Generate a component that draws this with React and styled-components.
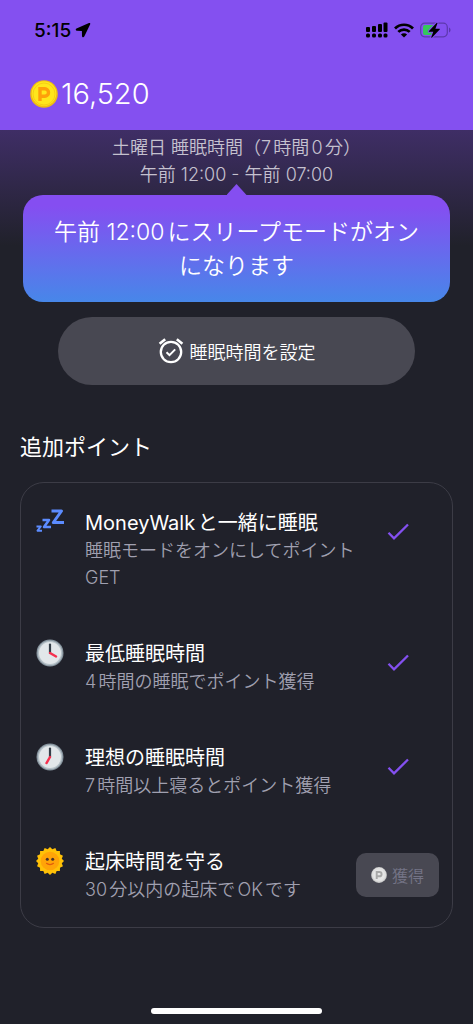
import React from 'react';
import styled, { createGlobalStyle } from 'styled-components';

const GlobalStyle = createGlobalStyle`
  * {
    box-sizing: border-box;
  }

  body {
    margin: 0;
    background: #20212a;
    font-family: Inter, 'Noto Sans CJK JP', sans-serif;
    font-weight: 350;
    text-autospace: normal;
  }

  button {
    font: inherit;
    border: none;
    cursor: pointer;
  }
`;

const Page = styled.div`
  display: flex;
  flex-direction: column;
  min-height: 100vh;
  background: #20212a;
  color: #fff;
`;

const Header = styled.header`
  padding: 18px 22px 18px 30px;
  background: #8450f0;
`;

const StatusBar = styled.div`
  display: flex;
  align-items: center;
  justify-content: space-between;
  height: 24px;
  padding-left: 4px;
  color: #000;
`;

const StatusGroup = styled.div`
  display: flex;
  align-items: center;
  gap: ${props => props.gap};
  font-size: 19px;
  font-weight: 500;
`;

const Points = styled.div`
  display: flex;
  align-items: center;
  gap: 3px;
  margin-top: 34px;
  font-size: 29px;
  font-weight: 300;
  line-height: 36px;
`;

const Main = styled.main`
  flex: 1;
  padding: 4px 20px 24px;
  background: linear-gradient(#3f2e66, #20212a 116px);
`;

const Schedule = styled.p`
  margin: 0;
  color: #c5c1cf;
  font-size: 18px;
  line-height: 27px;
  text-align: center;
`;

const Bubble = styled.div`
  position: relative;
  margin: 7px 3px 15px;
  padding: 20px 30px 19px;
  border-radius: 20px;
  background: linear-gradient(#854ef1 10%, #4787e9);
  font-size: 23px;
  line-height: 34px;
  text-align: center;

  &::before {
    content: '';
    position: absolute;
    bottom: 100%;
    left: 50%;
    width: 20px;
    height: 11px;
    margin-left: -10px;
    background: #854ef1;
    clip-path: polygon(50% 0, 100% 100%, 0 100%);
  }
`;

const SetButton = styled.button`
  display: flex;
  align-items: center;
  justify-content: center;
  gap: 6px;
  width: calc(100% - 76px);
  height: 68px;
  margin: 0 38px;
  padding: 0;
  border-radius: 34px;
  background: #484852;
  color: #fff;
  && {
    font-size: 18px;
  }
`;

const SectionTitle = styled.h2`
  margin: 46px 0 18px;
  font-size: 22px;
  font-weight: 400;
  line-height: 33px;
`;

const MissionList = styled.ul`
  display: flex;
  flex-direction: column;
  gap: 48px;
  margin: 0;
  padding: 25px 13px 24px 15px;
  border: 1px solid #3c3c46;
  border-radius: 24px;
  list-style: none;
`;

const Mission = styled.li`
  display: grid;
  grid-template-columns: 28px 1fr 83px;
`;

const MissionIcon = styled.div`
  height: 28px;
`;

const MissionText = styled.div`
  padding: 2px 0 0 21px;
  line-height: 27px;
`;

const MissionTitle = styled.h3`
  margin: 0;
  font-size: 20px;
  font-weight: 400;
`;

const MissionDetail = styled.p`
  margin: 0;
  color: #a0a0b0;
  font-size: 18px;
`;

const Done = styled.div`
  display: flex;
  align-items: center;
  justify-content: center;
  height: 48px;
`;

const ClaimButton = styled.button`
  display: flex;
  align-items: center;
  justify-content: center;
  gap: 5px;
  width: 100%;
  height: 44px;
  margin-top: 6px;
  padding: 0;
  border-radius: 10px;
  background: #484852;
  color: #747486;
  && {
    font-size: 16px;
  }
`;

const HomeIndicator = styled.div`
  width: 36%;
  height: 6px;
  margin: 0 auto 10px;
  border-radius: 3px;
  background: #fff;
`;

const LocationIcon = () => (
  <svg width="16" height="16" viewBox="0 0 16 16" aria-hidden="true">
    <path d="M14 1 1.500 6.500C.3 7.100.6 8.800 2 8.800l4.900.1.100 5c0 1.500 1.800 1.700 2.400.4L15.200 2.200c.3-.9-.3-1.500-1.200-1.200Z" />
  </svg>
);

const SignalIcon = () => (
  <svg width="22" height="16" viewBox="0 0 22 16" aria-hidden="true">
    <rect x="0" y="5" width="4" height="5" rx="1" />
    <rect x="6" y="4" width="4" height="6" rx="1" />
    <rect x="12" y="2" width="4" height="8" rx="1" />
    <rect x="17.500" y="0.500" width="4" height="9.500" rx="1" />
    <rect x="0" y="11.500" width="4" height="4" rx="1.500" />
    <rect x="6" y="11.500" width="4" height="4" rx="1.500" />
    <rect x="12" y="11.500" width="4" height="4" rx="1.500" />
    <rect x="17.500" y="11.500" width="4" height="4" rx="1.500" />
  </svg>
);

const WifiIcon = () => (
  <svg width="20" height="15" viewBox="0 0 20 15" fill="none" stroke="#000" strokeWidth="2.700" aria-hidden="true">
    <path d="M1 5.500a12.700 12.700 0 0 1 18 0" />
    <path d="M4.300 8.900a8.100 8.100 0 0 1 11.400 0" />
    <path d="M10 14.600 6.900 11.500a4.400 4.400 0 0 1 6.200 0Z" fill="#000" stroke="none" />
  </svg>
);

const BatteryIcon = () => (
  <svg width="31" height="16" viewBox="0 0 31 16" aria-hidden="true">
    <rect x="0.700" y="1.200" width="26.600" height="13.600" rx="4" fill="none" stroke="#5c38ac" strokeWidth="1.200" />
    <path d="M29 5.500c2 .8 2 4.200 0 5Z" fill="#5c38ac" />
    <path d="M5 3h8v10H5a2 2 0 0 1-2-2V5a2 2 0 0 1 2-2Z" fill="#34c759" />
    <path
      d="M16.800.8 9 8.900c-.4.500-.2.900.4.900h3.900l-2 5.200c-.3.700.3.900.8.400L19.700 7.600c.4-.5.2-.9-.4-.9h-3.900l2-5.200c.2-.7-.2-1-.6-.7Z"
      stroke="#8450f0"
      strokeWidth="2"
      paintOrder="stroke"
    />
  </svg>
);

const CoinIcon = ({ size, rim, face, mark }) => (
  <svg width={size} height={size} viewBox="0 0 28 28" aria-hidden="true">
    <circle cx="14" cy="14" r="13.800" fill={rim} />
    <circle cx="14" cy="13.500" r="12.300" fill={face} />
    <circle cx="14" cy="14" r="11" fill="none" stroke={rim} strokeWidth="0.600" />
    <path d="M10 21V8.800h4.800a3.700 3.700 0 0 1 0 7.400H11.500" fill="none" stroke={mark} strokeWidth="3.400" />
  </svg>
);

const AlarmIcon = () => (
  <svg width="26" height="26" viewBox="0 0 26 26" fill="none" stroke="#fff" strokeWidth="2.300" aria-hidden="true">
    <circle cx="13" cy="14" r="10.200" />
    <path d="m8.500 14.200 3 3 5.700-5.800" strokeWidth="2" />
    <path d="M1.600 5.800 7.200 1.200M18.800 1.200l5.600 4.600" strokeWidth="2.600" />
  </svg>
);

const CheckIcon = () => (
  <svg width="22" height="18" viewBox="0 0 22 18" fill="none" stroke="#8450f0" strokeWidth="2.300" role="img" aria-label="完了">
    <path d="m1.500 9.800 5.500 5.500L21 1.500" />
  </svg>
);

const ZzzIcon = () => (
  <svg width="28" height="28" viewBox="0 0 28 28" fill="none" stroke="#5c8cff" strokeLinejoin="round" aria-hidden="true">
    <path d="M15.500 3h10l-8.200 11.500H28" strokeWidth="3" />
    <path d="M6.500 12h6.500l-5 7h7" strokeWidth="2.500" />
    <path d="M0.500 18.500h4.300l-3.300 4.200h4.500" strokeWidth="1.900" />
  </svg>
);

const ClockIcon = ({ hour }) => {
  const angle = (hour * Math.PI) / 6;
  return (
    <svg width="28" height="28" viewBox="0 0 28 28" strokeLinecap="round" aria-hidden="true">
      <circle cx="14" cy="14" r="13.500" fill="#86949e" />
      <circle cx="14" cy="14" r="12.300" fill="#b5c0c7" />
      <circle cx="14" cy="14" r="11" fill="#e2e7ea" />
      <path d="M14 14V5.500" stroke="#343e48" strokeWidth="2.200" />
      <line
        x1="14"
        y1="14"
        x2={14 + Math.sin(angle) * 7}
        y2={14 - Math.cos(angle) * 7}
        stroke="#f5314f"
        strokeWidth="2.400"
      />
    </svg>
  );
};

const SunIcon = () => {
  const rays = Array.from({ length: 32 }, (_, i) => {
    const radius = i % 2 === 0 ? 14 : 12;
    const angle = (i * Math.PI) / 16;
    return `${14 + Math.sin(angle) * radius},${14 - Math.cos(angle) * radius}`;
  }).join(' ');
  return (
    <svg width="28" height="28" viewBox="0 0 28 28" aria-hidden="true">
      <polygon points={rays} fill="#ffc107" />
      <circle cx="14" cy="14" r="9.300" fill="#ffa408" />
      <circle cx="11.300" cy="12.300" r="1.500" fill="#49302a" />
      <circle cx="16.700" cy="12.300" r="1.500" fill="#49302a" />
      <path d="M10.500 16.300c1.800 1.700 5.200 1.700 7 0" fill="none" stroke="#e35d0b" strokeWidth="1.200" strokeLinecap="round" />
    </svg>
  );
};

const missions = [
  { icon: <ZzzIcon />, title: 'MoneyWalkと一緒に睡眠', detail: '睡眠モードをオンにしてポイント GET', done: true },
  { icon: <ClockIcon hour={4} />, title: '最低睡眠時間', detail: '4時間の睡眠でポイント獲得', done: true },
  { icon: <ClockIcon hour={7} />, title: '理想の睡眠時間', detail: '7時間以上寝るとポイント獲得', done: true },
  { icon: <SunIcon />, title: '起床時間を守る', detail: '30分以内の起床でOKです', done: false },
];

const App = () => (
  <Page>
    <GlobalStyle />
    <Header>
      <StatusBar>
        <StatusGroup gap="4px">
          5:15
          <LocationIcon />
        </StatusGroup>
        <StatusGroup gap="6px">
          <SignalIcon />
          <WifiIcon />
          <BatteryIcon />
        </StatusGroup>
      </StatusBar>
      <Points>
        <CoinIcon size={28} rim="#f0bc10" face="#ffe61c" mark="#ff9f0a" />
        16,520
      </Points>
    </Header>
    <Main>
      <Schedule>土曜日 睡眠時間（7時間0分）</Schedule>
      <Schedule>午前 12:00 - 午前 07:00</Schedule>
      <Bubble>午前 12:00にスリープモードがオンになります</Bubble>
      <SetButton type="button">
        <AlarmIcon />
        睡眠時間を設定
      </SetButton>
      <SectionTitle>追加ポイント</SectionTitle>
      <MissionList>
        {missions.map(mission => (
          <Mission key={mission.title}>
            <MissionIcon>{mission.icon}</MissionIcon>
            <MissionText>
              <MissionTitle>{mission.title}</MissionTitle>
              <MissionDetail>{mission.detail}</MissionDetail>
            </MissionText>
            {mission.done ? (
              <Done>
                <CheckIcon />
              </Done>
            ) : (
              <ClaimButton type="button">
                <CoinIcon size={16} rim="#c9c9c9" face="#e6e6e6" mark="#a8a8a8" />
                獲得
              </ClaimButton>
            )}
          </Mission>
        ))}
      </MissionList>
    </Main>
    <HomeIndicator />
  </Page>
);

export default App;
